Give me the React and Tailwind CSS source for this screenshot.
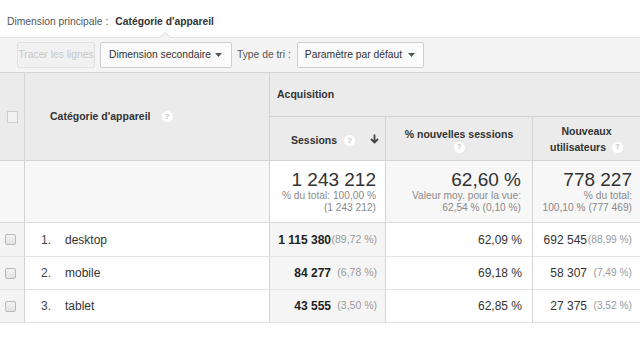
import React from "react";

const COLS = "grid grid-cols-[25px_245px_116px_147px_107px]";

function Help({ className = "" }) {
  return (
    <span
      className={
        "inline-flex items-center justify-center w-[11px] h-[11px] rounded-full bg-white text-[#c4c4c4] text-[8px] font-bold leading-none " +
        className
      }
    >
      ?
    </span>
  );
}

function Caret() {
  return (
    <svg width="7" height="4" viewBox="0 0 7 4" className="shrink-0">
      <polygon points="0,0 7,0 3.5,4" fill="#555" />
    </svg>
  );
}

function Check() {
  return (
    <span className="block w-[11px] h-[11px] rounded-[2px] border border-[#b9b9b9] bg-gradient-to-b from-[#f4f4f4] to-[#e2e2e2]" />
  );
}

const rows = [
  { n: "1.", name: "desktop", s: "1 115 380", sp: "(89,72 %)", pct: "62,09 %", u: "692 545", up: "(88,99 %)", h: "h-[34px]" },
  { n: "2.", name: "mobile", s: "84 277", sp: "(6,78 %)", pct: "69,18 %", u: "58 307", up: "(7,49 %)", h: "h-[33px]" },
  { n: "3.", name: "tablet", s: "43 555", sp: "(3,50 %)", pct: "62,85 %", u: "27 375", up: "(3,52 %)", h: "h-[33px]" },
];

export default function App() {
  return (
    <div className="w-[640px] h-[344px] bg-white overflow-hidden font-['Liberation_Sans',Arial,sans-serif] text-[#333]">
      {/* Primary dimension line */}
      <div className="relative h-[37px] pt-[7px] pl-[7px] flex items-center text-[10.3px]">
        <span className="text-[#555]">Dimension principale :</span>
        <span className="ml-[7px] font-bold text-[#333]">Catégorie d'appareil</span>
        <svg
          width="12"
          height="6"
          viewBox="0 0 12 6"
          className="absolute left-[159px] bottom-[-1px]"
        >
          <polyline points="0,6 6,0.5 12,6" fill="#f4f4f4" stroke="#dcdcdc" strokeWidth="1" />
        </svg>
      </div>

      {/* Toolbar */}
      <div className="h-[35px] bg-[#f4f4f4] border-t border-[#e3e3e3] flex items-center pl-[17px] text-[10.3px]">
        <div className="h-[26px] w-[78px] rounded-[2px] border border-[#e2e2e2] bg-[#f1f1f1] flex items-center justify-center text-[#c8c8c8]">
          Tracer les lignes
        </div>
        <div className="ml-[5px] h-[26px] w-[132px] rounded-[2px] border border-[#cfcfcf] bg-[#fbfbfb] flex items-center pl-[8px] pr-[9px] justify-between text-[#333]">
          <span>Dimension secondaire</span>
          <Caret />
        </div>
        <span className="ml-[5px] text-[#555]">Type de tri :</span>
        <div className="ml-[6px] h-[26px] w-[127px] rounded-[2px] border border-[#cfcfcf] bg-[#fbfbfb] flex items-center pl-[7px] pr-[8px] justify-between text-[#333]">
          <span>Paramètre par défaut</span>
          <Caret />
        </div>
      </div>

      {/* Header */}
      <div className={COLS + " grid-rows-[44px_43px] bg-[#ebebeb] border-t border-b border-[#d4d4d4] text-[10.5px] font-bold text-[#333]"}>
        <div className="row-span-2 border-r border-[#d4d4d4] flex items-center justify-center">
          <span className="block w-[11px] h-[12px] border border-[#cdcdcd] bg-[#f2f2f2]" />
        </div>
        <div className="row-span-2 border-r border-[#d4d4d4] flex items-center pl-[25px]">
          <span>Catégorie d'appareil</span>
          <Help className="ml-[11px]" />
        </div>
        <div className="col-span-3 border-b border-[#d4d4d4] flex items-center pl-[7px] pt-[1px]">
          Acquisition
        </div>
        <div className="border-r border-[#d4d4d4] flex items-center pl-[21px] pr-[4px] pt-[4px]">
          <span>Sessions</span>
          <Help className="ml-[7px]" />
          <svg width="9" height="10" viewBox="0 0 9 10" className="ml-auto mr-[2px] mt-[-4px]">
            <path d="M4.5 0.5 V8.5 M1 5 L4.5 8.5 L8 5" fill="none" stroke="#444" strokeWidth="1.8" />
          </svg>
        </div>
        <div className="border-r border-[#d4d4d4] flex flex-col items-center justify-center leading-[16px] pt-[1px]">
          <span>% nouvelles sessions</span>
          <Help />
        </div>
        <div className="flex flex-col items-center justify-center leading-[16px] pt-[1px]">
          <span>Nouveaux</span>
          <span className="flex items-center">
            utilisateurs
            <Help className="ml-[6px]" />
          </span>
        </div>
      </div>

      {/* Totals */}
      <div className={COLS + " h-[62px] border-b border-[#dcdcdc]"}>
        <div className="bg-[#f7f7f7] border-r border-[#d4d4d4]" />
        <div className="bg-[#f7f7f7] border-r border-[#d4d4d4]" />
        <div className="bg-white border-r border-[#d4d4d4] flex flex-col items-end pr-[9px] pt-[9px]">
          <span className="text-[19px] leading-[20px] text-[#333]">1 243 212</span>
          <span className="text-[10.2px] leading-[12px] text-[#8a8a8a] text-right">
            % du total: 100,00 %
            <br />
            (1 243 212)
          </span>
        </div>
        <div className="bg-[#f7f7f7] border-r border-[#d4d4d4] flex flex-col items-end pr-[11px] pt-[9px]">
          <span className="text-[19px] leading-[20px] text-[#333]">62,60 %</span>
          <span className="text-[10.2px] leading-[12px] text-[#8a8a8a] text-right">
            Valeur moy. pour la vue:
            <br />
            62,54 % (0,10 %)
          </span>
        </div>
        <div className="bg-[#f7f7f7] flex flex-col items-end pr-[8px] pt-[9px]">
          <span className="text-[19px] leading-[20px] text-[#333]">778 227</span>
          <span className="text-[10.2px] leading-[12px] text-[#8a8a8a] text-right">
            % du total:
            <br />
            100,10 % (777 469)
          </span>
        </div>
      </div>

      {/* Data rows */}
      {rows.map((r) => (
        <div key={r.n} className={COLS + " " + r.h + " border-b border-[#e2e2e2] text-[12px]"}>
          <div className="bg-[#f4f4f4] border-r border-[#d4d4d4] flex items-center pl-[5px]">
            <Check />
          </div>
          <div className="bg-white border-r border-[#d4d4d4] flex items-center pl-[16px]">
            <span className="w-[24px] text-[#444]">{r.n}</span>
            <span className="text-[#333]">{r.name}</span>
          </div>
          <div className="bg-[#f5f5f5] border-r border-[#d4d4d4] flex items-center justify-end pr-[8px] whitespace-nowrap">
            <span className="font-bold text-[#222]">{r.s}</span>
            <span className="w-[46px] shrink-0 text-right text-[10.5px] text-[#999] whitespace-nowrap">{r.sp}</span>
          </div>
          <div className="bg-white border-r border-[#d4d4d4] flex items-center justify-end pr-[10px] text-[#333]">
            {r.pct}
          </div>
          <div className="bg-white flex items-center justify-end pr-[8px] whitespace-nowrap">
            <span className="text-[#333]">{r.u}</span>
            <span className="w-[45px] shrink-0 text-right text-[10.2px] text-[#999] whitespace-nowrap">{r.up}</span>
          </div>
        </div>
      ))}
    </div>
  );
}
